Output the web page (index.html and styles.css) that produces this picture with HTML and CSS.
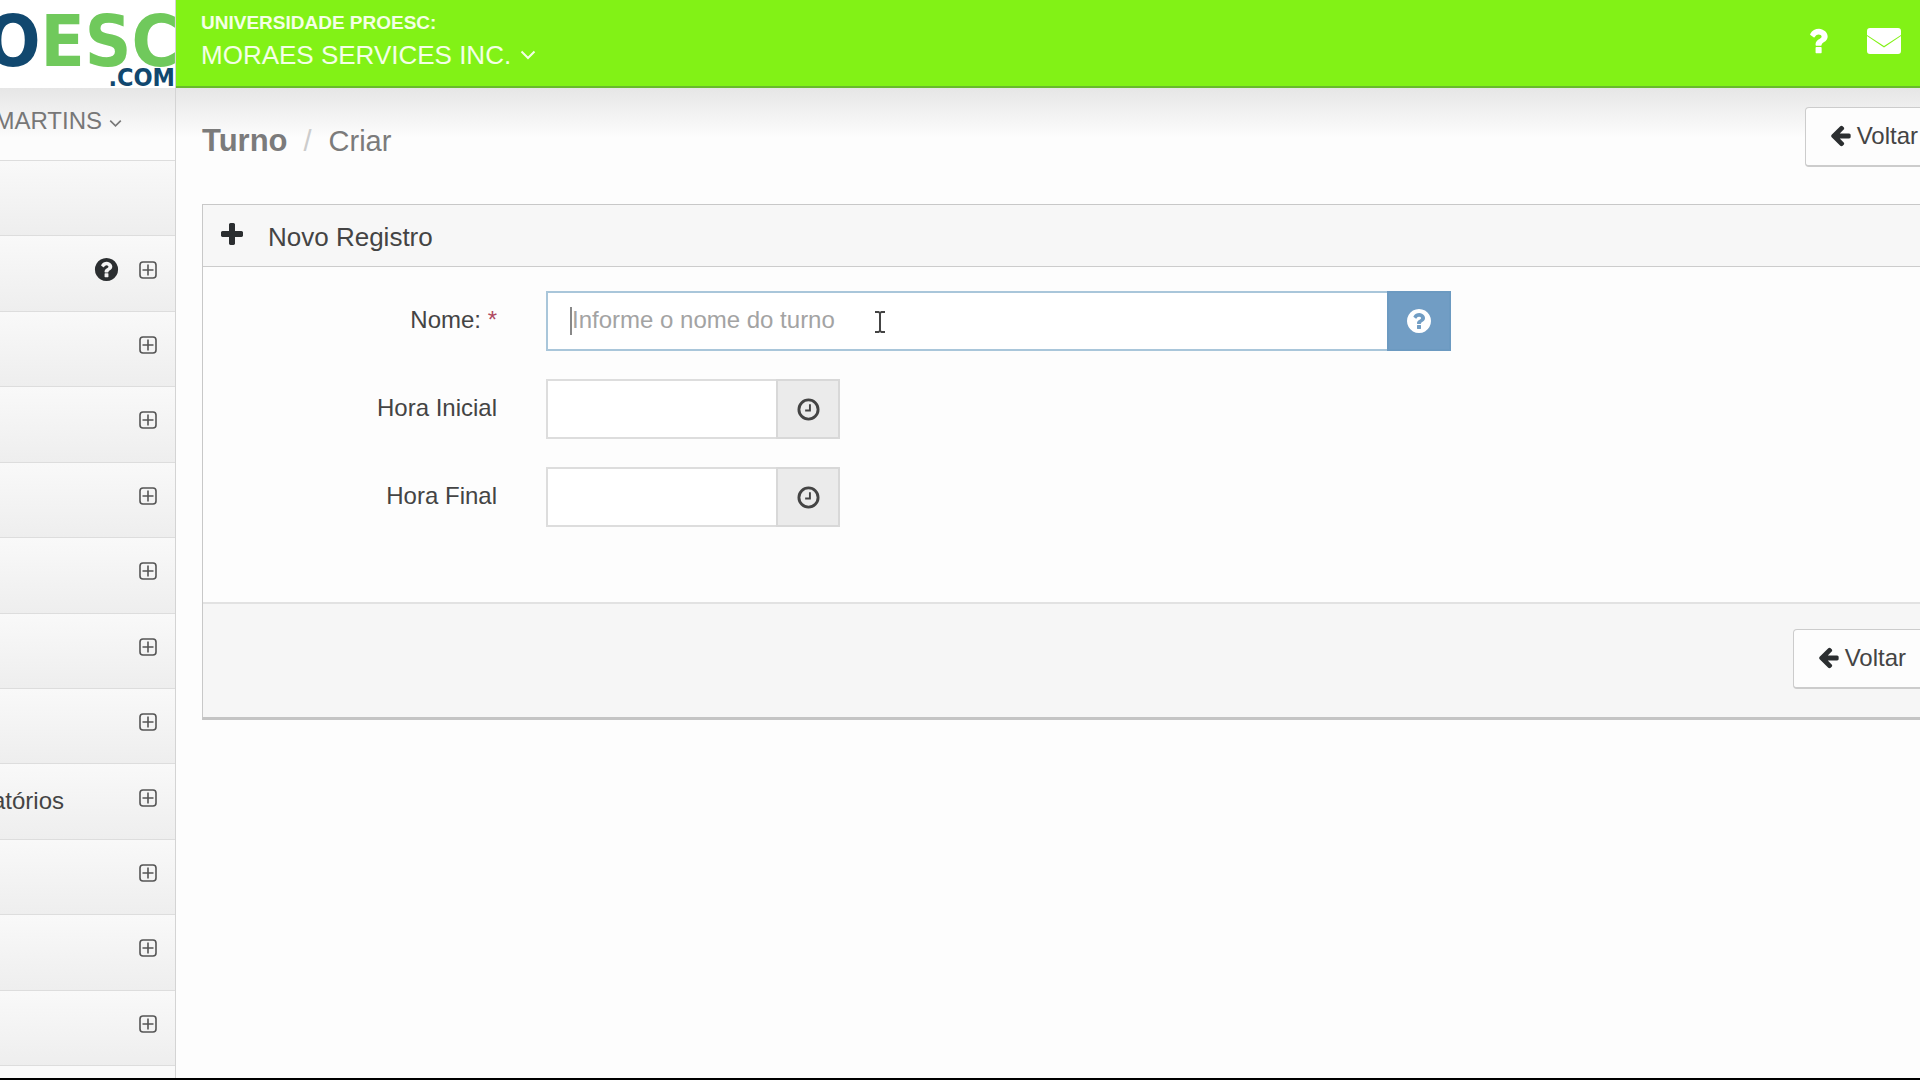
FILE: index.html
```
<!DOCTYPE html>
<html lang="pt-BR">

<head>
    <meta charset="UTF-8">
    <title>Turno - Criar</title>
    <link rel="stylesheet" href="styles.css">
</head>

<body>
    <!-- icons -->
    <svg class="sprite" aria-hidden="true">
        <symbol id="i-plus" viewBox="0 0 1792 1792">
            <path d="M1600 736v192q0 40-28 68t-68 28h-416v416q0 40-28 68t-68 28h-192q-40 0-68-28t-28-68v-416h-416q-40 0-68-28t-28-68v-192q0-40 28-68t68-28h416v-416q0-40 28-68t68-28h192q40 0 68 28t28 68v416h416q40 0 68 28t28 68z"/>
        </symbol>
        <symbol id="i-help" viewBox="0 0 1792 1792">
            <path d="M1024 1376v-192q0-14-9-23t-23-9h-192q-14 0-23 9t-9 23v192q0 14 9 23t23 9h192q14 0 23-9t9-23zm256-672q0-88-55.5-163t-138.5-116-170-41q-243 0-371 213-15 24 8 42l132 100q7 6 19 6 16 0 25-12 53-68 86-92 34-24 86-24 48 0 85.5 26t37.5 59q0 38-20 61t-68 45q-63 28-115.5 86.5t-52.5 125.5v36q0 14 9 23t23 9h192q14 0 23-9t9-23q0-19 21.5-49.5t54.5-49.5q32-18 49-28.5t46-35 44.5-48 28-60.5 12.5-81zm384 192q0 209-103 385.5t-279.5 279.5-385.5 103-385.5-103-279.5-279.5-103-385.5 103-385.5 279.5-279.5 385.5-103 385.5 103 279.5 279.5 103 385.5z"/>
        </symbol>
        <symbol id="i-question" viewBox="0 0 1792 1792">
            <path d="M1088 1256v240q0 16-12 28t-28 12h-240q-16 0-28-12t-12-28v-240q0-16 12-28t28-12h240q16 0 28 12t12 28zm316-600q0 54-15.5 101t-35 76.5-55 59.5-57.5 43.5-61 35.5q-41 23-68.5 65t-27.5 67q0 17-12 32.5t-28 15.5h-240q-15 0-25.5-18.5t-10.5-37.5v-45q0-83 65-156.5t143-108.5q59-27 84-56t25-76q0-42-46.5-74t-107.5-32q-65 0-108 29-35 25-107 115-13 16-31 16-12 0-25-8l-164-125q-13-10-15.5-25t5.5-28q160-266 464-266 80 0 161 31t146 83 106 127.5 41 158.5z"/>
        </symbol>
        <symbol id="i-arrow" viewBox="128 128 1536 1664">
            <path d="M1664 896v128q0 53-32.5 90.5t-84.5 37.5h-704l293 294q38 36 38 90t-38 90l-75 76q-37 37-90 37-52 0-91-37l-651-652q-37-37-37-90 0-52 37-91l651-650q38-38 91-38 52 0 90 38l75 74q38 38 38 91t-38 91l-293 293h704q52 0 84.5 37.5t32.5 90.5z"/>
        </symbol>
        <symbol id="i-mail" viewBox="0 0 34 26">
            <path d="M3 0h28a3 3 0 0 1 3 3v4L17 18 0 7V3a3 3 0 0 1 3-3zM0 8l17 11.500L34 8v15a3 3 0 0 1-3 3H3a3 3 0 0 1-3-3z"/>
        </symbol>
        <symbol id="i-clock" viewBox="0 0 24 24">
            <circle cx="12" cy="12" r="10" fill="none" stroke="currentColor" stroke-width="3"/>
            <path d="M13.500 6.500v6.500H8.500" fill="none" stroke="currentColor" stroke-width="2"/>
        </symbol>
        <symbol id="i-expand" viewBox="0 0 18 18">
            <rect x="1" y="1" width="16" height="16" rx="3" fill="none" stroke="currentColor" stroke-width="1.600"/>
            <path d="M9 3.500v11M3.500 9h11" fill="none" stroke="currentColor" stroke-width="1.600"/>
        </symbol>
        <symbol id="i-down" viewBox="0 0 16 10">
            <path d="M1.500 1.500L8 8l6.500-6.500" fill="none" stroke="currentColor" stroke-width="2"/>
        </symbol>
    </svg>

    <div class="page">
        <aside class="sidebar">
            <a href="#" class="logo">
                <span class="logo-name"><b>O</b>ESC</span>
                <span class="logo-com">.COM</span>
            </a>
            <button type="button" class="user">MARTINS<svg class="down"><use href="#i-down"/></svg></button>
            <ul class="menu">
                <li></li>
                <li><svg class="help"><use href="#i-help"/></svg><svg class="expand"><use href="#i-expand"/></svg></li>
                <li><svg class="expand"><use href="#i-expand"/></svg></li>
                <li><svg class="expand"><use href="#i-expand"/></svg></li>
                <li><svg class="expand"><use href="#i-expand"/></svg></li>
                <li><svg class="expand"><use href="#i-expand"/></svg></li>
                <li><svg class="expand"><use href="#i-expand"/></svg></li>
                <li><svg class="expand"><use href="#i-expand"/></svg></li>
                <li><a href="#">atórios</a><svg class="expand"><use href="#i-expand"/></svg></li>
                <li><svg class="expand"><use href="#i-expand"/></svg></li>
                <li><svg class="expand"><use href="#i-expand"/></svg></li>
                <li><svg class="expand"><use href="#i-expand"/></svg></li>
            </ul>
        </aside>

        <div class="main">
            <header class="topbar">
                <div class="school">
                    <strong>UNIVERSIDADE PROESC:</strong>
                    <button type="button">MORAES SERVICES INC.<svg class="down"><use href="#i-down"/></svg></button>
                </div>
                <nav class="tools">
                    <a href="#" aria-label="Ajuda"><svg class="question"><use href="#i-question"/></svg></a>
                    <a href="#" aria-label="Mensagens"><svg class="mail"><use href="#i-mail"/></svg></a>
                </nav>
            </header>

            <main class="content">
                <div class="title">
                    <h1>Turno</h1>
                    <span class="slash">/</span>
                    <span class="current">Criar</span>
                    <button type="button" class="btn"><svg><use href="#i-arrow"/></svg>Voltar</button>
                </div>

                <form class="panel">
                    <h2><svg><use href="#i-plus"/></svg>Novo Registro</h2>
                    <div class="fields">
                        <div class="row">
                            <label for="nome">Nome: <em>*</em></label>
                            <div class="group name">
                                <input type="text" id="nome" placeholder="Informe o nome do turno">
                                <span class="addon"><svg class="help"><use href="#i-help"/></svg></span>
                                <i class="caret"></i>
                                <svg class="pointer" viewBox="0 0 10 22"><path d="M0 1h3.500L5 2l1.500-1H10M0 21h3.500L5 20l1.500 1H10M5 2v18"/></svg>
                            </div>
                        </div>
                        <div class="row">
                            <label for="inicio">Hora Inicial</label>
                            <div class="group time">
                                <input type="text" id="inicio">
                                <span class="addon"><svg><use href="#i-clock"/></svg></span>
                            </div>
                        </div>
                        <div class="row">
                            <label for="fim">Hora Final</label>
                            <div class="group time">
                                <input type="text" id="fim">
                                <span class="addon"><svg><use href="#i-clock"/></svg></span>
                            </div>
                        </div>
                    </div>
                    <div class="actions">
                        <button type="button" class="btn"><svg><use href="#i-arrow"/></svg>Voltar</button>
                    </div>
                </form>
            </main>
        </div>
    </div>
</body>

</html>
```
FILE: styles.css
```
* {
    margin: 0;
    padding: 0;
    box-sizing: border-box;
}

body {
    font-family: "Liberation Sans", Arial, sans-serif;
    font-size: 24px;
    color: #444;
    background: #fdfdfd;
}

a {
    color: inherit;
    text-decoration: none;
}

button,
input {
    font: inherit;
    color: inherit;
}

button {
    border: none;
    background: none;
}

svg {
    fill: currentColor;
    flex: none;
}

.sprite {
    display: none;
}

.page {
    display: flex;
    min-height: 100vh;
    overflow: hidden;
    border-bottom: 2px solid #000;
}

/* sidebar */
.sidebar {
    display: flex;
    flex-direction: column;
    flex: none;
    width: 176px;
    padding-bottom: 12px;
    overflow: hidden;
    border-right: 1px solid #d4d4d4;
    background: #fafafa;
}

.logo {
    display: flex;
    flex-direction: column;
    align-items: flex-end;
    height: 88px;
    padding-top: 14px;
    overflow: hidden;
    font-family: "DejaVu Sans Condensed", "DejaVu Sans", sans-serif;
    font-weight: bold;
    background: #fff;
}

.logo-name {
    margin-right: -4px;
    font-size: 72px;
    line-height: 54px;
    color: #70c95c;
}

.logo-name b {
    color: #11486f;
}

.logo-com {
    font-size: 25px;
    line-height: 20px;
    color: #11486f;
}

.user {
    display: flex;
    align-items: center;
    justify-content: flex-end;
    height: 72px;
    padding: 0 53px 6px 0;
    color: #777;
    background: linear-gradient(#e6e6e6, #fcfcfc 50px);
}

.user .down {
    width: 13px;
    height: 9px;
    margin: 4px 0 0 7px;
}

.menu {
    display: flex;
    flex: 1;
    flex-direction: column;
    list-style: none;
    border-bottom: 1px solid #ddd;
}

.menu li {
    display: flex;
    flex: 1;
    align-items: center;
    justify-content: flex-end;
    padding: 0 18px 8px 0;
    border-top: 1px solid #ddd;
    background: linear-gradient(#f9f9f9, #eee);
}

.menu a {
    margin-right: 75px;
    padding-top: 6px;
}

.menu .help {
    width: 27px;
    height: 27px;
    margin-right: 19px;
    color: #2b2e30;
}

.menu .expand {
    width: 18px;
    height: 18px;
    color: #555;
}

/* top bar */
.main {
    flex: 1;
    min-width: 0;
}

.topbar {
    display: flex;
    justify-content: space-between;
    height: 88px;
    padding: 11px 19px 0 25px;
    color: #f4ffe6;
    border-bottom: 2px solid #68bb2b;
    background: #82f216;
}

.school strong {
    display: block;
    font-size: 19px;
    line-height: 24px;
}

.school button {
    display: flex;
    align-items: center;
    font-size: 26px;
    line-height: 40px;
}

.school .down {
    width: 16px;
    height: 10px;
    margin-left: 9px;
}

.tools {
    display: flex;
    align-items: center;
    height: 60px;
    gap: 32px;
    color: #fff;
}

.tools a {
    display: flex;
}

.question {
    width: 34px;
    height: 34px;
}

.mail {
    width: 34px;
    height: 26px;
}

/* the content runs on past the window's right edge */
.content {
    padding: 19px 0 0 26px;
    margin-right: -23px;
    background: linear-gradient(#e6e6e6, #fdfdfd 50px);
}

.title {
    display: flex;
    align-items: center;
    margin-bottom: 37px;
    font-size: 29px;
    line-height: 50px;
    color: #7b7b7b;
}

.title h1,
.slash,
.current {
    padding-top: 8px;
}

.title h1 {
    font-size: 31px;
}

.slash {
    margin: 0 17px 0 16px;
    color: #ccc;
}

.btn {
    display: flex;
    align-items: center;
    gap: 6px;
    height: 60px;
    padding: 0 24px 2px;
    margin-left: auto;
    font-size: 24px;
    line-height: 28px;
    color: #444;
    border: 1px solid #ccc;
    border-bottom: 2px solid #ccc;
    border-radius: 4px;
    background: #fdfdfd;
}

.btn svg {
    width: 21px;
    height: 22px;
    color: #2b2e30;
}

/* panel */
.panel {
    border: 1px solid #c8c8c8;
    border-bottom: 3px solid #c4c4c4;
    background: #fdfdfd;
}

.panel h2 {
    display: flex;
    align-items: center;
    height: 62px;
    padding: 4px 0 0 15px;
    font-size: 26px;
    font-weight: normal;
    border-bottom: 1px solid #ccc;
    background: #f7f7f7;
}

.panel h2 svg {
    width: 28px;
    height: 28px;
    margin: 0 22px 6px 0;
    color: #2b2e30;
}

.fields {
    display: grid;
    gap: 28px;
    padding: 24px 0 75px;
}

.row {
    display: flex;
    gap: 49px;
}

.row label {
    width: 294px;
    line-height: 57px;
    text-align: right;
}

.row em {
    font-style: normal;
    color: #b04a62;
}

.group {
    position: relative;
    display: flex;
    height: 60px;
}

.name {
    width: 905px;
}

.time {
    width: 294px;
}

.group input {
    flex: 1;
    min-width: 0;
    padding: 0 24px 2px;
    border: 2px solid #ddd;
    border-right: none;
    outline: none;
    background: #fff;
}

.group input::placeholder {
    color: #a3a3a3;
}

.addon {
    display: flex;
    align-items: center;
    justify-content: center;
    width: 64px;
    border: 2px solid #d8d8d8;
    background: #ebebeb;
}

.addon svg {
    width: 23px;
    height: 23px;
}

.name input {
    border-color: #a9c6da;
}

.name .addon {
    color: #fff;
    border-color: #6c9ac1;
    background: #719dc4;
}

.name .addon svg {
    width: 28px;
    height: 28px;
}

.caret {
    position: absolute;
    top: 16px;
    left: 24px;
    width: 2px;
    height: 28px;
    background: #888;
}

.pointer {
    position: absolute;
    top: 20px;
    left: 329px;
    width: 10px;
    height: 22px;
    fill: none;
    stroke: #444;
    stroke-width: 2;
}

.actions {
    display: flex;
    padding: 25px 11px 28px 0;
    border-top: 2px solid #e2e2e2;
    background: #f6f6f6;
}
```
